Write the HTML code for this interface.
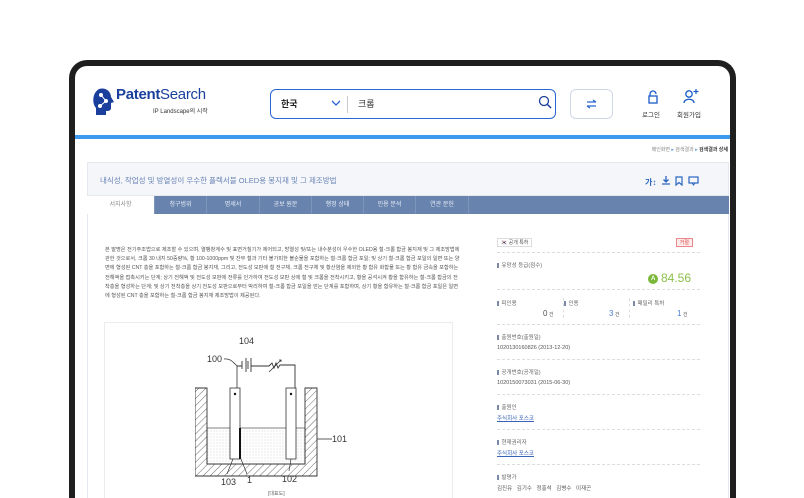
<!DOCTYPE html>
<html><head><meta charset="utf-8"><style>
*{margin:0;padding:0;box-sizing:border-box}
html,body{width:804px;height:498px;overflow:hidden}
body{background:#fff;position:relative;font-family:"Liberation Sans","Noto Sans CJK KR",sans-serif;color:#444}
.frame{position:absolute;left:69px;top:60px;width:667px;height:438px;border:6px solid #1f1f1f;border-bottom:none;border-radius:18px 18px 0 0;background:#fff;overflow:hidden}
.a{position:absolute}
.scr{position:absolute;left:0;top:0;width:655px;height:432px;overflow:hidden}
.tab{position:absolute;top:130px;height:18px;line-height:18px;font-size:6px;color:#e8eef8;text-align:center;border-right:1px solid #7e95bb}
.sm{font-size:5.5px;color:#666}
.lbl{font-size:5.5px;color:#666}
.lbl:before{content:"";display:inline-block;width:1.5px;height:5px;background:#7a8aa6;margin-right:3px;vertical-align:-1px}
.dash{position:absolute;left:0;width:203px;border-top:1px dashed #ddd}
.val{font-size:5.5px;color:#555}
.lnk{font-size:5.5px;color:#3a63b8;text-decoration:underline}
</style></head><body>
<div class="frame"><div class="scr">
<svg class="a" style="left:18px;top:22px" width="22" height="27" viewBox="0 0 22 27"><path d="M6 1 C12 -1 18 3 18 9 L21 14 L18 15 L18 20 C18 23 15 23 13 23 L13 27 L3 27 L3 20 C-1 16 -1 5 6 1Z" fill="#1a3f9c"/><circle cx="8" cy="7" r="2" fill="#fff"/><circle cx="13" cy="13" r="2" fill="#fff"/><circle cx="7" cy="18" r="2" fill="#fff"/><path d="M8 7 L13 13 L7 18" stroke="#fff" stroke-width="1" fill="none"/></svg>
<div class="a" style="left:41px;top:20px;font-size:15px;font-weight:bold;color:#1a3f9c;letter-spacing:-0.3px">Patent<span style="font-weight:normal">Search</span></div>
<div class="a" style="left:78px;top:40px;font-size:6px;color:#333">IP Landscape의 시작</div>
<div class="a" style="left:195px;top:23px;width:286px;height:30px;border:1.5px solid #2a66d0;border-radius:6px"></div>
<div class="a" style="left:206px;top:31px;font-size:9px;font-weight:bold;color:#222">한국</div>
<svg class="a" style="left:256px;top:34px" width="10" height="7"><path d="M1 1 L5 5 L9 1" stroke="#2a66d0" stroke-width="1.3" fill="none"/></svg>
<div class="a" style="left:272px;top:30px;width:1px;height:17px;background:#ccc"></div>
<div class="a" style="left:283px;top:31px;font-size:9px;color:#333">크롬</div>
<svg class="a" style="left:463px;top:29px" width="14" height="14"><circle cx="6" cy="6" r="4.5" stroke="#1a3f9c" stroke-width="1.3" fill="none"/><path d="M9.5 9.5 L13 13" stroke="#1a3f9c" stroke-width="1.5"/></svg>
<div class="a" style="left:495px;top:23px;width:43px;height:30px;border:1px solid #cfd8e6;border-radius:6px"></div>
<svg class="a" style="left:511px;top:33px" width="11" height="10"><path d="M1 3 H10 M7 1 L10 3 M10 7 H1 M4 9 L1 7" stroke="#2a66d0" stroke-width="1.2" fill="none"/></svg>
<svg class="a" style="left:572px;top:24px" width="12" height="14"><path d="M3 6 V4 A3 3 0 0 1 9 4" stroke="#1a5bc7" stroke-width="1.3" fill="none"/><rect x="2" y="6" width="8" height="7" stroke="#1a5bc7" stroke-width="1.3" fill="none"/></svg>
<div class="a" style="left:567px;top:43px;font-size:6.5px;color:#333">로그인</div>
<svg class="a" style="left:608px;top:23px" width="16" height="15"><circle cx="6" cy="5" r="3.2" stroke="#1a5bc7" stroke-width="1.3" fill="none"/><path d="M1 14 C1 9 11 9 11 14" stroke="#1a5bc7" stroke-width="1.3" fill="none"/><path d="M13 0 V5 M10.5 2.5 H15.5" stroke="#1a5bc7" stroke-width="1.2"/></svg>
<div class="a" style="left:602px;top:43px;font-size:6.5px;color:#333">회원가입</div>
<div class="a" style="left:0;top:69px;width:655px;height:4px;background:#3b9af0"></div>
<div class="a sm" style="right:2px;top:80px;font-size:5px;color:#888">메인화면 <span style="color:#5a9be0">▸</span> 검색결과 <span style="color:#5a9be0">▸</span> <b style="color:#333">검색결과 상세</b></div>
<div class="a" style="left:12px;top:96px;width:642px;height:336px;border:1px solid #e4e8ef;border-bottom:none;background:#fff"></div>
<div class="a" style="left:12px;top:96px;width:642px;height:34px;background:#f4f6fa;border:1px solid #e4e8ef"></div>
<div class="a" style="left:25px;top:109px;font-size:7.5px;color:#6a84b5">내식성, 작업성 및 방열성이 우수한 플렉서블 OLED용 봉지재 및 그 제조방법</div>
<div class="a" style="left:570px;top:111px;font-size:8px;font-weight:bold;color:#2a66c0">가↕</div>
<svg class="a" style="left:587px;top:110px" width="40" height="10"><path d="M4 0 V6 M1.5 3.5 L4 6 L6.5 3.5 M0 8 H8" stroke="#2a66c0" stroke-width="1.3" fill="none"/><path d="M14 1 H20 V9 L17 6.5 L14 9Z" stroke="#2a66c0" stroke-width="1.2" fill="none"/><rect x="27" y="1" width="9" height="6" stroke="#2a66c0" stroke-width="1.2" fill="none"/><path d="M30 7 L31.5 9 L33 7" stroke="#2a66c0" fill="none"/></svg>
<div class="a" style="left:12px;top:130px;width:642px;height:18px;background:#6883ad"></div>
<div class="tab" style="left:12px;width:68px;background:#fff;color:#888">서지사항</div>
<div class="tab" style="left:80px;width:52px">청구범위</div>
<div class="tab" style="left:132px;width:53px">명세서</div>
<div class="tab" style="left:185px;width:52px">공보 원문</div>
<div class="tab" style="left:237px;width:52px">행정 상태</div>
<div class="tab" style="left:289px;width:52px">인용 분석</div>
<div class="tab" style="left:341px;width:53px">연관 문헌</div>
<div class="a" style="left:30px;top:180px;width:356px;font-size:5.2px;line-height:9.2px;color:#555">본 발명은 전기주조법으로 제조할 수 있으며, 열팽창계수 및 표면거칠기가 제어되고, 방열성 및/또는 내수분성이 우수한 OLED용 철-크롬 합금 봉지재 및 그 제조방법에 관한 것으로서, 크롬 30 내지 50중량%, 황 100-1000ppm 및 잔부 철과 기타 불가피한 불순물을 포함하는 철-크롬 합금 포일; 및 상기 철-크롬 합금 포일의 일면 또는 양면에 형성된 CNT 층을 포함하는 철-크롬 합금 봉지재, 그리고, 전도성 모판에 철 전구체, 크롬 전구체 및 황산염을 제외한 황 함유 화합물 또는 황 함유 금속을 포함하는 전해액을 접촉시키는 단계; 상기 전해액 및 전도성 모판에 전류를 인가하여 전도성 모판 상에 철 및 크롬을 전착시키고, 황을 공석시켜 황을 함유하는 철-크롬 합금의 전착층을 형성하는 단계; 및 상기 전착층을 상기 전도성 모판으로부터 박리하여 철-크롬 합금 포일을 얻는 단계를 포함하며, 상기 황을 함유하는 철-크롬 합금 포일은 일면에 형성된 CNT 층을 포함하는 철-크롬 합금 봉지재 제조방법이 제공된다.</div>
<div class="a" style="left:29px;top:256px;width:349px;height:176px;border:1px solid #ececec;border-bottom:none"></div>
<svg class="a" style="left:120px;top:262px" width="160" height="160" viewBox="0 0 160 160" font-family="Liberation Sans" font-size="9" fill="#333">
<defs><pattern id="h" width="5" height="5" patternUnits="userSpaceOnUse" patternTransform="rotate(45)"><line x1="0" y1="0" x2="0" y2="5" stroke="#444" stroke-width="0.8"/></pattern><pattern id="d" width="3" height="3" patternUnits="userSpaceOnUse"><circle cx="1" cy="1" r="0.35" fill="#888"/></pattern></defs>
<text x="44" y="16">104</text><text x="12" y="34">100</text>
<path d="M29 31 C35 30 38 34 42 38 V60" stroke="#333" fill="none" stroke-width="0.8"/>
<path d="M42 38 H47 M47 33 V41 M51 30 V44 M53 33 V41 M56 30 V44 M56 38 H74 L77 35 L79 40 L81 35 L83 40 L85 37 H100 V60" stroke="#333" fill="none" stroke-width="0.9"/>
<path d="M74 44 L86 32 M84 32 L86 32 L86 34" stroke="#333" fill="none" stroke-width="0.8"/>
<path d="M0 60 H12 V136 H110 V60 H122 V148 H0Z" fill="url(#h)" stroke="#333" stroke-width="0.9"/>
<rect x="12" y="100" width="98" height="36" fill="url(#d)"/>
<rect x="12" y="100" width="98" height="36" fill="none" stroke="#333" stroke-width="0.6"/>
<rect x="35" y="60" width="10" height="71" fill="#fff" stroke="#333" stroke-width="0.8"/>
<rect x="44" y="100" width="2" height="31" fill="#111"/>
<rect x="91" y="60" width="10" height="71" fill="#fff" stroke="#333" stroke-width="0.8"/>
<circle cx="40" cy="66" r="1.2" fill="#111"/><circle cx="96" cy="66" r="1.2" fill="#111"/>
<path d="M122 111 H137" stroke="#333" stroke-width="0.8"/><text x="137" y="114">101</text>
<path d="M38 131 L32 146 M46 131 L52 146 M96 131 L94 143" stroke="#333" stroke-width="0.7"/>
<text x="26" y="157">103</text><text x="52" y="155">1</text><text x="87" y="154">102</text>
</svg>
<div class="a" style="left:193px;top:425px;font-size:5px;line-height:6px;color:#666">[대표도]</div>
<div class="a" style="left:422px;top:170px;width:203px;height:262px">
<div class="a" style="left:0;top:2px;height:9px;padding:0 3px;border:1px solid #ddd;font-size:5px;line-height:8px;color:#555">🇰🇷 공개 특허</div>
<div class="a" style="right:7px;top:2px;height:9px;padding:0 3px;border:1px solid #e88;background:#fdeaea;font-size:5px;line-height:8px;color:#d44">거절</div>
<div class="dash" style="top:16px"></div>
<div class="a lbl" style="left:0;top:25px">유망성 등급(점수)</div>
<div class="a" style="left:151px;top:38px;width:10px;height:10px;border-radius:50%;background:#7bb83a"></div>
<div class="a" style="left:154px;top:40px;font-size:6px;color:#fff;font-weight:bold">A</div>
<div class="a" style="left:164px;top:35px;font-size:12px;color:#8cc04a">84.56</div>
<div class="dash" style="top:53px"></div>
<div class="a lbl" style="left:0;top:63px">피인용</div>
<div class="a lbl" style="left:67px;top:63px">인용</div>
<div class="a lbl" style="left:136px;top:63px">패밀리 특허</div>
<div class="a" style="left:66px;top:62px;height:20px;border-left:1px dashed #ddd"></div>
<div class="a" style="left:132px;top:62px;height:20px;border-left:1px dashed #ddd"></div>
<div class="a" style="left:46px;top:73px;font-size:8px;color:#555">0<span style="font-size:5px"> 건</span></div>
<div class="a" style="left:112px;top:73px;font-size:8px;color:#4a7fd0">3<span style="font-size:5px;color:#555"> 건</span></div>
<div class="a" style="left:180px;top:73px;font-size:8px;color:#4a7fd0">1<span style="font-size:5px;color:#555"> 건</span></div>
<div class="dash" style="top:88px"></div>
<div class="a lbl" style="left:0;top:97px">출원번호(출원일)</div>
<div class="a val" style="left:0;top:109px">1020130160826 (2013-12-20)</div>
<div class="dash" style="top:123px"></div>
<div class="a lbl" style="left:0;top:132px">공개번호(공개일)</div>
<div class="a val" style="left:0;top:144px">1020150073031 (2015-06-30)</div>
<div class="dash" style="top:158px"></div>
<div class="a lbl" style="left:0;top:167px">출원인</div>
<div class="a lnk" style="left:0;top:178px">주식회사 포스코</div>
<div class="dash" style="top:193px"></div>
<div class="a lbl" style="left:0;top:202px">현재권리자</div>
<div class="a lnk" style="left:0;top:213px">주식회사 포스코</div>
<div class="dash" style="top:228px"></div>
<div class="a lbl" style="left:0;top:237px">발명가</div>
<div class="a val" style="left:0;top:248px">김진유 &nbsp; 김기수 &nbsp; 정홍석 &nbsp; 김병수 &nbsp; 이재곤</div>
</div>
</div></div>
</body></html>
